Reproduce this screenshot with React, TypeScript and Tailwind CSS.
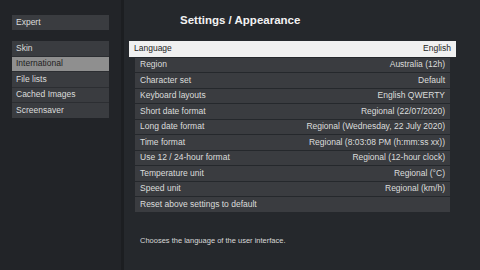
const sideItems = ["Skin", "International", "File lists", "Cached Images", "Screensaver"];

const rows: [string, string][] = [
  ["Language", "English"],
  ["Region", "Australia (12h)"],
  ["Character set", "Default"],
  ["Keyboard layouts", "English QWERTY"],
  ["Short date format", "Regional (22/07/2020)"],
  ["Long date format", "Regional (Wednesday, 22 July 2020)"],
  ["Time format", "Regional (8:03:08 PM (h:mm:ss xx))"],
  ["Use 12 / 24-hour format", "Regional (12-hour clock)"],
  ["Temperature unit", "Regional (°C)"],
  ["Speed unit", "Regional (km/h)"],
  ["Reset above settings to default", ""],
];

export default function App() {
  return (
    <div className="flex h-[270px] w-[480px] overflow-hidden bg-[#25282c] font-['Liberation_Sans',Arial,sans-serif] text-[8.5px] text-[#dcdcdc]">
      {/* Sidebar */}
      <div className="w-[124px] shrink-0 border-r-[3px] border-[#1c1e21] bg-[#222428] px-[12px] pt-[15px]">
        <div className="flex h-[14.5px] items-center bg-[#3a3c40] px-[4px]">Expert</div>
        <div className="mt-[11.5px] flex flex-col gap-px bg-[#2c2e32]">
          {sideItems.map((item) => (
            <div
              key={item}
              className={
                item === "International"
                  ? "flex h-[14.5px] items-center bg-[#8f8f8f] px-[4px] text-[#1e1e1e]"
                  : "flex h-[14.5px] items-center bg-[#3a3c40] px-[4px]"
              }
            >
              {item}
            </div>
          ))}
        </div>
      </div>

      {/* Main */}
      <div className="flex flex-1 flex-col pl-[11px] pr-[30px]">
        <div className="pl-[45px] pt-[14px] text-[11.5px] font-bold leading-[13px] text-[#f2f2f2]">
          Settings / Appearance
        </div>
        <div className="mt-[14px] flex flex-col gap-px">
          {rows.map(([label, value], i) =>
            i === 0 ? (
              <div
                key={label}
                className="mx-[-6px] flex h-[15.5px] items-center justify-between bg-[#f0f0f0] px-[5px] text-[#1e1e1e]"
              >
                <span>{label}</span>
                <span>{value}</span>
              </div>
            ) : (
              <div
                key={label}
                className="flex h-[14.5px] items-center justify-between bg-[#3a3c40] px-[5px]"
              >
                <span>{label}</span>
                <span>{value}</span>
              </div>
            )
          )}
        </div>
        <p className="mt-[23px] pl-[5px] text-[7.5px] text-[#d8d8d8]">
          Chooses the language of the user interface.
        </p>
      </div>
    </div>
  );
}
